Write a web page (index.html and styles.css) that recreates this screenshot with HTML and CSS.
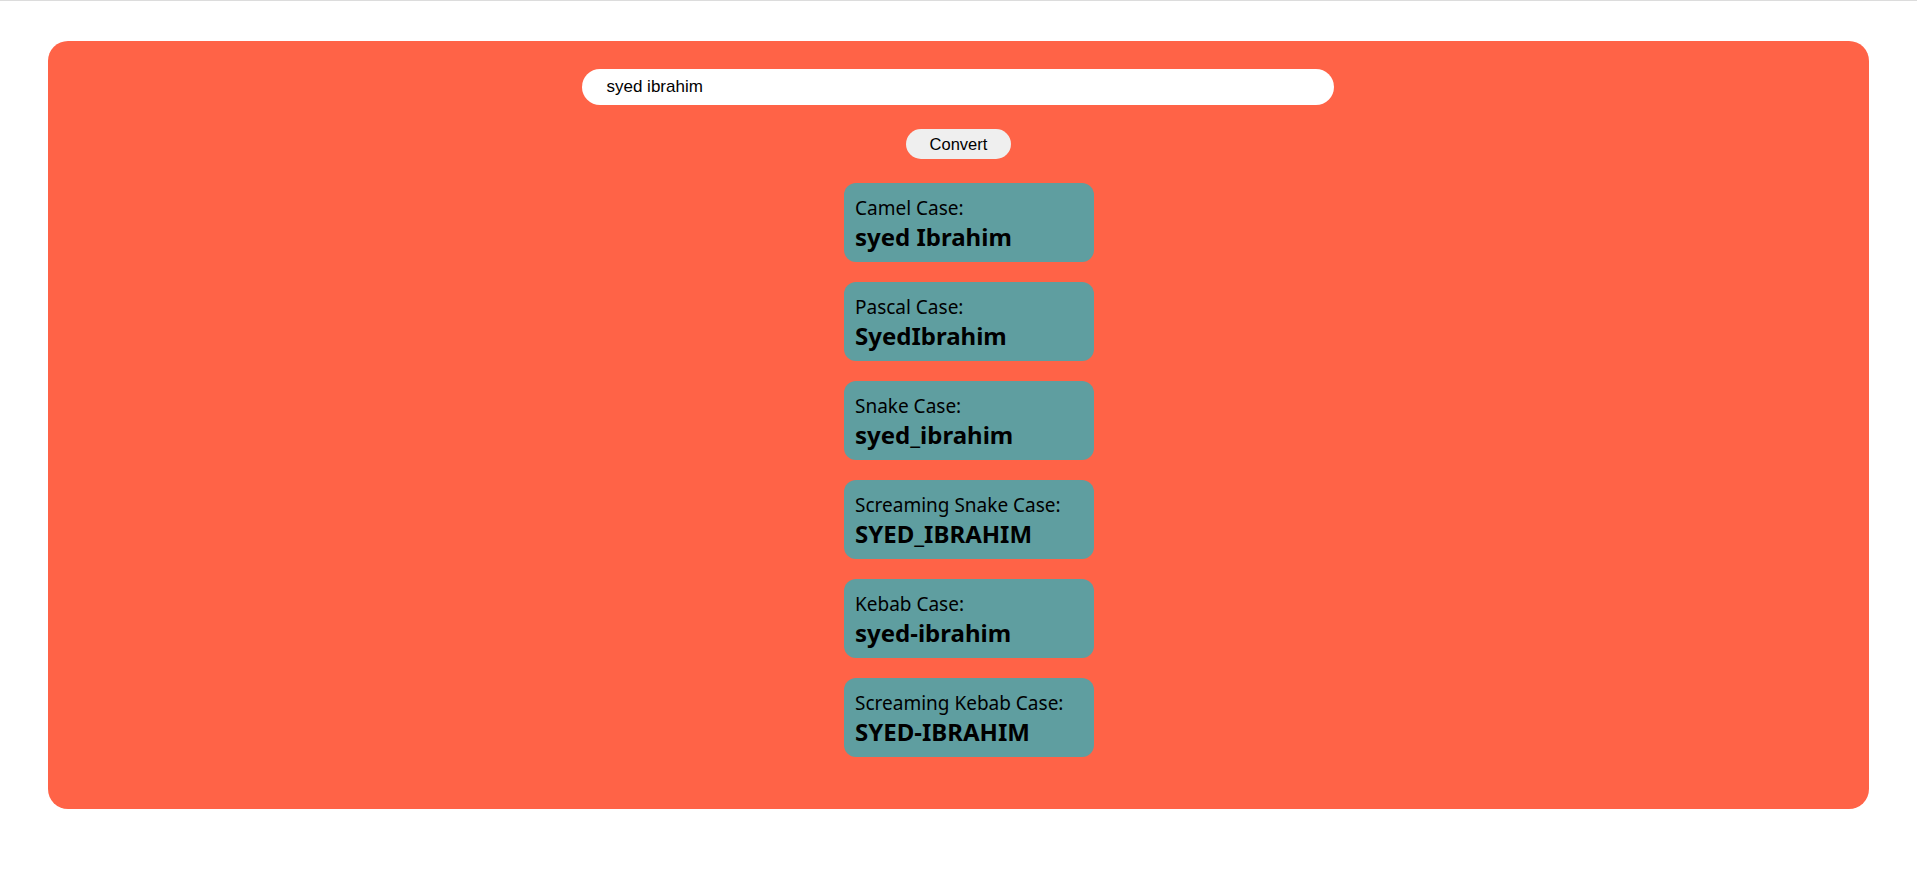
FILE: index.html
```html
<!DOCTYPE html>
<html lang="en">
<head>
<meta charset="UTF-8">
<title>Case Converter</title>
<link rel="stylesheet" href="styles.css">
</head>
<body>
<main class="panel">
  <input class="text-input" type="text" value="syed ibrahim">
  <button class="convert-btn" type="button">Convert</button>
  <div class="results">
    <div class="card"><div class="label">Camel Case:</div><div class="value">syed Ibrahim</div></div>
    <div class="card"><div class="label">Pascal Case:</div><div class="value">SyedIbrahim</div></div>
    <div class="card"><div class="label">Snake Case:</div><div class="value">syed_ibrahim</div></div>
    <div class="card"><div class="label">Screaming Snake Case:</div><div class="value">SYED_IBRAHIM</div></div>
    <div class="card"><div class="label">Kebab Case:</div><div class="value">syed-ibrahim</div></div>
    <div class="card"><div class="label">Screaming Kebab Case:</div><div class="value">SYED-IBRAHIM</div></div>
  </div>
</main>
</body>
</html>
```

FILE: styles.css
```css
html, body {
  margin: 0;
  padding: 0;
  background: #ffffff;
}

body {
  border-top: 1px solid #dcdcdc;
  font-family: "Liberation Sans", Arial, sans-serif;
}

.panel {
  width: 95%;
  margin: 40px auto 0;
  background: #ff6347;
  border-radius: 20px;
  padding: 28px 0 52px;
  display: flex;
  flex-direction: column;
  align-items: center;
}

.text-input {
  box-sizing: border-box;
  width: 752px;
  height: 36px;
  border: none;
  border-radius: 18px;
  background: #ffffff;
  padding: 0 24px;
  font-family: "Liberation Sans", Arial, sans-serif;
  font-size: 17px;
  color: #000;
  outline: none;
}

.convert-btn {
  margin-top: 24px;
  box-sizing: border-box;
  width: 105px;
  height: 30px;
  border: none;
  border-radius: 15px;
  background: #efefef;
  font-family: "Liberation Sans", Arial, sans-serif;
  font-size: 16.5px;
  color: #000;
  padding: 0;
}

.results {
  margin-top: 24px;
  padding-left: 21px;
  display: flex;
  flex-direction: column;
  gap: 20px;
}

.card {
  box-sizing: border-box;
  width: 250px;
  height: 79px;
  background: #5f9ea0;
  border-radius: 12px;
  padding: 13px 11px 8px;
  font-family: "Noto Sans", "Open Sans", sans-serif;
  color: #000;
}

.label {
  font-size: 19px;
  line-height: 24px;
}

.value {
  font-size: 24px;
  line-height: 33px;
  font-weight: 700;
}
```
